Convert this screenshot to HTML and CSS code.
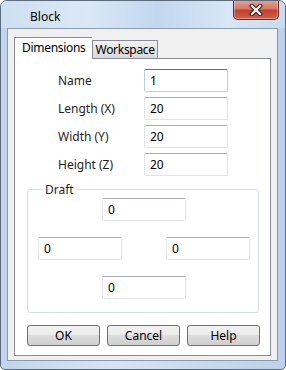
FILE: index.html
```html
<!DOCTYPE html>
<html lang="en">
<head>
    <meta charset="UTF-8">
    <title>Block</title>
    <link rel="stylesheet" href="styles.css">
</head>
<body>
    <div class="window">
        <!-- Barra de titulo -->
        <div class="titlebar">
            <span class="title">Block</span>
            <button class="close" title="Close">
                <svg width="18" height="12" viewBox="0 0 18 12">
                    <path d="M5 2 L13 10 M13 2 L5 10" stroke="#3b2320" stroke-width="4.4" stroke-linecap="square"/>
                    <path d="M5 2 L13 10 M13 2 L5 10" stroke="#ffffff" stroke-width="2.2" stroke-linecap="square"/>
                </svg>
            </button>
        </div>

        <div class="client">
            <div class="tabs">
                <div class="tab active">Dimensions</div>
                <div class="tab">Workspace</div>
            </div>

            <div class="panel">
                <div class="form">
                    <label>Name</label>
                    <input type="text" class="focus" value="1">
                    <label>Length (X)</label>
                    <input type="text" value="20">
                    <label>Width (Y)</label>
                    <input type="text" value="20">
                    <label>Height (Z)</label>
                    <input type="text" value="20">
                </div>

                <fieldset class="draft">
                    <legend>Draft</legend>
                    <div class="row center"><input type="text" value="0"></div>
                    <div class="row sides">
                        <input type="text" value="0">
                        <input type="text" value="0">
                    </div>
                    <div class="row center"><input type="text" value="0"></div>
                </fieldset>

                <div class="buttons">
                    <button class="btn">OK</button>
                    <button class="btn">Cancel</button>
                    <button class="btn">Help</button>
                </div>
            </div>
        </div>
    </div>
</body>
</html>
```

FILE: styles.css
```css
body {
    margin: 0;
    font-family: "Noto Sans", "Open Sans", sans-serif;
    font-size: 12px;
    background: #ffffff;
}
.window {
    width: 286px;
    height: 370px;
    box-sizing: border-box;
    border: 1px solid #5b6b7c;
    border-radius: 7px 7px 5px 5px;
    background: linear-gradient(to right, #c0d5eb, #d6e5f5 40%, #c7daef 70%, #bcd2ea);
    display: flex;
    flex-direction: column;
    overflow: hidden;
}
.titlebar {
    height: 27px;
    display: flex;
    align-items: flex-start;
    background: linear-gradient(to right, #cddff2, #dbe8f6 30%, #c2d7ee 55%, #d8e6f5 80%, #c8dbf0);
}
.title {
    margin: 7px 0 0 29px;
    color: #000000;
}
.close {
    margin-left: auto;
    margin-right: 6px;
    margin-top: -1px;
    width: 46px;
    height: 20px;
    padding: 0;
    border: 1px solid #6b2a22;
    border-top: none;
    border-radius: 0 0 5px 5px;
    background: linear-gradient(#e8a393, #d47868 45%, #c4402c 55%, #d2604a);
    box-shadow: inset 0 0 0 1px rgba(255, 255, 255, 0.35);
    display: flex;
    align-items: center;
    justify-content: center;
}
.client {
    flex: 1;
    margin: 0 7px 8px 6px;
    border: 1px solid #8b98a8;
    background: #f0f0f0;
    padding: 8px 6px 4px 6px;
    display: flex;
    flex-direction: column;
}
.tabs {
    display: flex;
    align-items: flex-end;
    height: 21px;
    position: relative;
    z-index: 1;
}
.tab {
    height: 18px;
    box-sizing: border-box;
    padding: 0 2px 0 3px;
    border: 1px solid #898c95;
    border-bottom: none;
    background: linear-gradient(#f2f2f2, #e4e4e4 50%, #d9d9d9);
    line-height: 18px;
    letter-spacing: -0.3px;
    color: #000000;
}
.tab.active {
    height: 22px;
    margin-bottom: -1px;
    padding: 0 6px 0 7px;
    background: #ffffff;
    border-right: none;
    line-height: 20px;
}
.panel {
    flex: 1;
    border: 1px solid #898c95;
    background: #ffffff;
    display: flex;
    flex-direction: column;
}
.form {
    display: grid;
    grid-template-columns: 86px 84px;
    row-gap: 5px;
    align-items: center;
    padding: 10px 0 0 43px;
}
.form label {
    color: #1e1e1e;
}
input {
    width: 84px;
    height: 23px;
    box-sizing: border-box;
    padding: 0 5px;
    border: 1px solid #e2e3ea;
    border-top-color: #abadb3;
    border-radius: 2px;
    font-family: inherit;
    font-size: 12px;
    color: #000000;
    background: #ffffff;
}
input.focus {
    border-color: #b5cfe7;
    border-top-color: #3d7bad;
}
.draft {
    margin: 5px 11px 0 12px;
    padding: 0 8px 13px 10px;
    border: 1px solid #d5dfe5;
    border-radius: 3px;
    display: flex;
    flex-direction: column;
    gap: 16px;
}
.draft legend {
    padding: 0 2px;
    margin-left: 5px;
    color: #1e1e1e;
}
.row {
    display: flex;
}
.row.center {
    justify-content: center;
}
.row.sides {
    justify-content: space-between;
}
.buttons {
    display: flex;
    gap: 7px;
    padding: 12px 0 0 12px;
}
.btn {
    width: 73px;
    height: 21px;
    border: 1px solid #707070;
    border-radius: 3px;
    background: linear-gradient(#f2f2f2, #ebebeb 50%, #dddddd 50%, #cfcfcf);
    font-family: inherit;
    font-size: 12px;
    color: #000000;
    padding: 0;
}
```
